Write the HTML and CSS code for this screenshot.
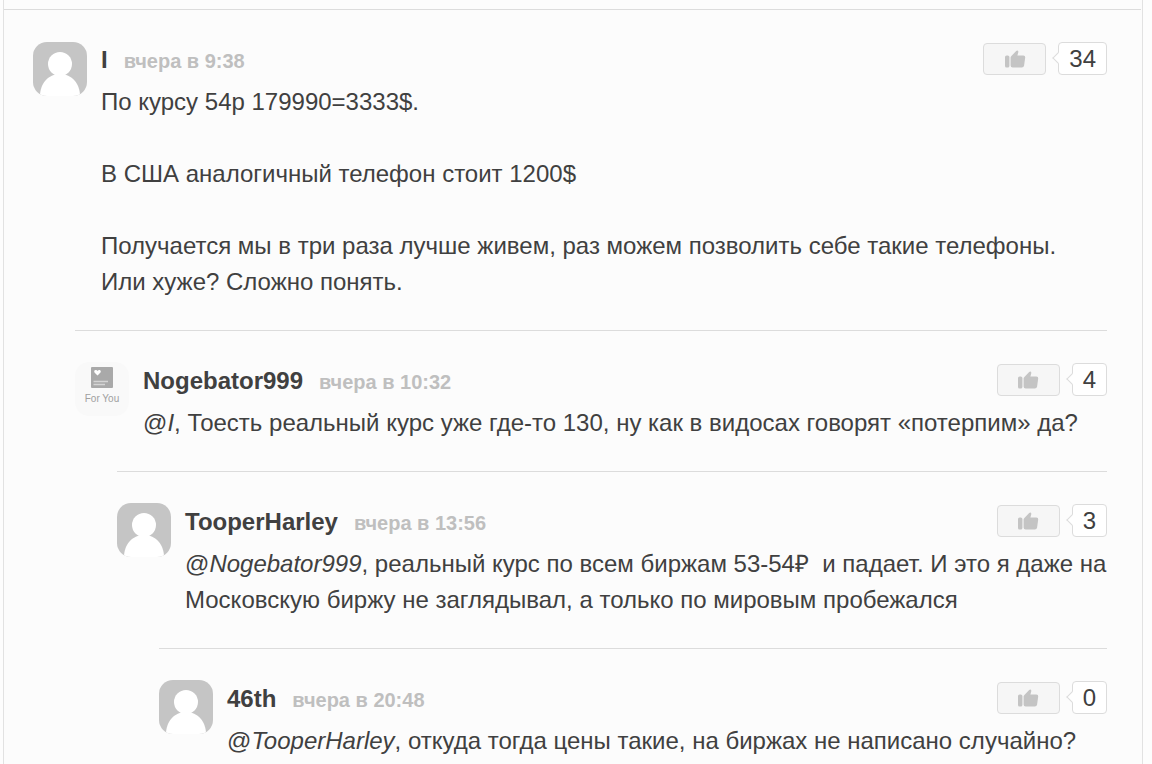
FILE: index.html
```html
<!DOCTYPE html>
<html lang="ru">
<head>
<meta charset="utf-8">
<meta name="viewport" content="width=device-width, initial-scale=1">
<title>Комментарии</title>
<link rel="stylesheet" href="styles.css">
</head>
<body>
<svg class="sprite" aria-hidden="true">
  <symbol id="person" viewBox="0 0 54 54">
    <rect width="54" height="54" fill="#c5c5c5"/>
    <circle cx="27" cy="22" r="12" fill="#fff"/>
    <path d="M7 54C7 42 15 32 27 32S47 42 47 54Z" fill="#fff"/>
  </symbol>
  <symbol id="thumb" viewBox="0 0 22 20">
    <rect x="1" y="6.500" width="4.400" height="12" rx="1.600"/>
    <path d="M6.600 8.600Q6.600 7.600 7.400 6.900L12.200 2Q13 1.200 13.900 1.700 14.500 2.200 14.300 3.200L13.400 6.600H19.400Q21.400 6.600 21.200 8.600L20.100 16.500Q19.800 18.500 17.800 18.500H8.600Q6.600 18.500 6.600 16.500Z"/>
  </symbol>
</svg>
<main class="comments">
  <article class="comment">
    <svg class="avatar" aria-hidden="true"><use href="#person"/></svg>
    <div class="body">
      <header class="head">
        <h2 class="name">I</h2><time class="time">вчера в 9:38</time>
        <div class="vote"><button class="like" type="button" aria-label="Нравится"><svg class="thumb"><use href="#thumb"/></svg></button><span class="count">34</span></div>
      </header>
      <p class="text">По курсу 54р 179990=3333$.<br><br>В США аналогичный телефон стоит 1200$<br><br>Получается мы в три раза лучше живем, раз можем позволить себе такие телефоны. Или хуже? Сложно понять.</p>
    </div>
  </article>
  <div class="replies">
    <article class="comment">
      <svg class="avatar" viewBox="0 0 54 54" aria-hidden="true">
        <rect width="54" height="54" fill="#f9f9f9"/>
        <rect x="16" y="5" width="22" height="21" rx="1" fill="#a9a9a9"/>
        <path d="M22.500 13.500L19.500 10.500Q18.500 8.500 20.500 8Q22 7.800 22.500 9Q23.200 7.800 24.800 8Q26.600 8.600 25.500 10.500Z" fill="#fff"/>
        <path d="M18.500 19.500H33M18.500 22.500H30" stroke="#d5d5d5" stroke-width="1.500"/>
        <text class="avatar-label" x="27" y="40" text-anchor="middle">For You</text>
      </svg>
      <div class="body">
        <header class="head">
          <h2 class="name">Nogebator999</h2><time class="time">вчера в 10:32</time>
          <div class="vote"><button class="like" type="button" aria-label="Нравится"><svg class="thumb"><use href="#thumb"/></svg></button><span class="count">4</span></div>
        </header>
        <p class="text">@<i>I</i>, Тоесть реальный курс уже где-то 130, ну как в видосах говорят «потерпим» да?</p>
      </div>
    </article>
    <div class="replies">
      <article class="comment">
        <svg class="avatar" aria-hidden="true"><use href="#person"/></svg>
        <div class="body">
          <header class="head">
            <h2 class="name">TooperHarley</h2><time class="time">вчера в 13:56</time>
            <div class="vote"><button class="like" type="button" aria-label="Нравится"><svg class="thumb"><use href="#thumb"/></svg></button><span class="count">3</span></div>
          </header>
          <p class="text">@<i>Nogebator999</i>, реальный курс по всем биржам 53-54₽&nbsp; и падает. И это я даже на Московскую биржу не заглядывал, а только по мировым пробежался</p>
        </div>
      </article>
      <div class="replies">
        <article class="comment">
          <svg class="avatar" aria-hidden="true"><use href="#person"/></svg>
          <div class="body">
            <header class="head">
              <h2 class="name">46th</h2><time class="time">вчера в 20:48</time>
              <div class="vote"><button class="like" type="button" aria-label="Нравится"><svg class="thumb"><use href="#thumb"/></svg></button><span class="count">0</span></div>
            </header>
            <p class="text">@<i>TooperHarley</i>, откуда тогда цены такие, на биржах не написано случайно?</p>
          </div>
        </article>
      </div>
    </div>
  </div>
</main>
</body>
</html>
```
FILE: styles.css
```css
body {
  margin: 0;
  padding: 0 9px 0 3px;
  background: #fdfdfd;
  color: #404040;
  font: 24px/36px "Liberation Sans", Arial, sans-serif;
}
.sprite { display: none; }
.comments {
  border: solid #e2e2e2;
  border-width: 0 1px;
  background: #fcfcfc;
  padding: 0 35px 0 29px;
}
.comments::before {
  content: "";
  display: block;
  height: 9px;
  margin: 0 -34px 0 -29px;
  border-bottom: 1px solid #dcdcdc;
}
.comment {
  display: flex;
  gap: 14px;
  padding: 32px 0 30px;
}
.replies { margin-left: 42px; }
.replies > .comment {
  padding-top: 31px;
  border-top: 1px solid #dcdcdc;
}
.replies .replies .replies > .comment { padding-bottom: 5px; }
.avatar {
  flex: none;
  width: 54px;
  height: 54px;
  border-radius: 14px;
}
.avatar-label {
  font: 10px "Liberation Sans", Arial, sans-serif;
  fill: #a0a0a0;
}
.body { flex: 1; min-width: 0; }
.head {
  display: flex;
  align-items: baseline;
  height: 42px;
}
.replies .head { padding-top: 1px; }
.name { margin: 0; font-size: 24px; }
.time {
  margin-left: 16px;
  color: #bfbfbf;
  font-size: 20px;
  font-weight: bold;
}
.vote {
  display: flex;
  align-self: flex-start;
  align-items: flex-end;
  gap: 12px;
  margin-left: auto;
}
.like {
  display: flex;
  align-items: center;
  justify-content: center;
  box-sizing: border-box;
  width: 63px;
  height: 32px;
  padding: 0;
  border: 1px solid #dcdcdc;
  border-radius: 4px;
  background: #f6f6f6;
}
.thumb { width: 22px; height: 20px; fill: #c4c4c4; }
.count {
  position: relative;
  padding: 0 10px;
  border: 1px solid #dcdcdc;
  border-radius: 4px;
  background: #fff;
  line-height: 31px;
}
.count::before {
  content: "";
  position: absolute;
  left: -5px;
  top: 11px;
  width: 7px;
  height: 7px;
  border: solid #dcdcdc;
  border-width: 0 0 1px 1px;
  background: #fff;
  transform: rotate(45deg);
}
.text { margin: 0; }
```
